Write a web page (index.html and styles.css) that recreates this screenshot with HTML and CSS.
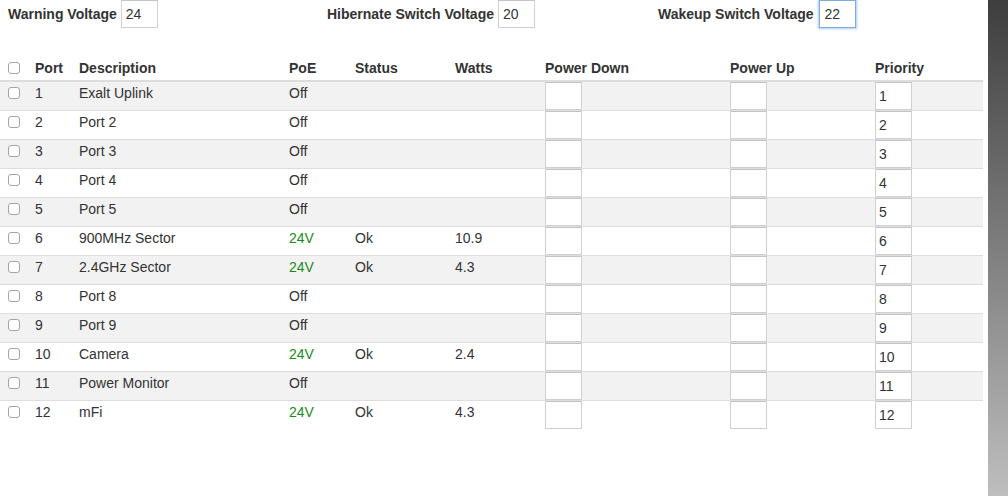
FILE: index.html
```html
<!DOCTYPE html>
<html lang="en">
<head>
  <meta charset="UTF-8" />
  <title>Port Power</title>
  <link rel="stylesheet" href="styles.css">
</head>
<body>

  <div class="page">
    <div class="voltages">
      <label class="voltage">Warning Voltage <input class="field" type="text" value="24"></label>
      <label class="voltage">Hibernate Switch Voltage <input class="field" type="text" value="20"></label>
      <label class="voltage">Wakeup Switch Voltage <input class="field focused" type="text" value="22"></label>
    </div>

    <table class="ports">
      <colgroup>
        <col class="col-check">
        <col class="col-port">
        <col class="col-desc">
        <col class="col-poe">
        <col class="col-status">
        <col class="col-watts">
        <col class="col-down">
        <col class="col-up">
        <col class="col-priority">
      </colgroup>
      <thead>
        <tr>
          <th><input type="checkbox" class="check"></th>
          <th>Port</th>
          <th>Description</th>
          <th>PoE</th>
          <th>Status</th>
          <th>Watts</th>
          <th>Power Down</th>
          <th>Power Up</th>
          <th>Priority</th>
        </tr>
      </thead>
      <tbody id="port-rows"></tbody>
    </table>
  </div>

  <div class="edge"></div>

  <script>
    const ports = [
      { port: 1, desc: "Exalt Uplink", poe: "Off" },
      { port: 2, desc: "Port 2", poe: "Off" },
      { port: 3, desc: "Port 3", poe: "Off" },
      { port: 4, desc: "Port 4", poe: "Off" },
      { port: 5, desc: "Port 5", poe: "Off" },
      { port: 6, desc: "900MHz Sector", poe: "24V", status: "Ok", watts: "10.9" },
      { port: 7, desc: "2.4GHz Sector", poe: "24V", status: "Ok", watts: "4.3" },
      { port: 8, desc: "Port 8", poe: "Off" },
      { port: 9, desc: "Port 9", poe: "Off" },
      { port: 10, desc: "Camera", poe: "24V", status: "Ok", watts: "2.4" },
      { port: 11, desc: "Power Monitor", poe: "Off" },
      { port: 12, desc: "mFi", poe: "24V", status: "Ok", watts: "4.3" }
    ];

    const rows = document.getElementById('port-rows');
    ports.forEach(p => {
      const tr = document.createElement('tr');
      const poeClass = p.poe === 'Off' ? '' : ' class="on"';
      tr.innerHTML =
        '<td><input type="checkbox" class="check"></td>' +
        '<td>' + p.port + '</td>' +
        '<td>' + p.desc + '</td>' +
        '<td' + poeClass + '>' + p.poe + '</td>' +
        '<td>' + (p.status || '') + '</td>' +
        '<td>' + (p.watts || '') + '</td>' +
        '<td><input class="field" type="text"></td>' +
        '<td><input class="field" type="text"></td>' +
        '<td><input class="field" type="text" value="' + p.port + '"></td>';
      rows.appendChild(tr);
    });
  </script>
</body>
</html>
```

FILE: styles.css
```css
body {
    margin: 0;
    font-family: "Liberation Sans", Arial, sans-serif;
    font-size: 14px;
    color: #333;
    background-color: #fff;
    display: flex;
    min-height: 100vh;
}

.page {
    width: 988px;
}

.edge {
    flex: 1;
    background: linear-gradient(to bottom, #3e3e3e, #bebebe);
}

.voltages {
    display: grid;
    grid-template-columns: 319px 331px auto;
    padding-left: 8px;
    height: 28px;
}

.voltage {
    font-weight: bold;
}

.voltage:nth-child(3) .field {
    margin-left: 2px;
}

.field {
    box-sizing: border-box;
    width: 37px;
    height: 28px;
    margin: 0;
    padding: 0 3px;
    border: 1px solid #d0d0d0;
    border-top-color: #c4c4c4;
    font-family: inherit;
    font-size: 14px;
    color: #333;
    background-color: #fff;
    outline: none;
}

.voltage .field {
    font-weight: normal;
    padding-left: 4px;
}

.field.focused {
    border-color: #7eaee0;
    box-shadow: 0 0 2px 1px rgba(102, 160, 230, 0.55);
}

.ports {
    width: 983px;
    margin-top: 30px;
    table-layout: fixed;
    border-collapse: collapse;
    border-spacing: 0;
}

.col-check { width: 27px; }
.col-port { width: 44px; }
.col-desc { width: 210px; }
.col-poe { width: 66px; }
.col-status { width: 100px; }
.col-watts { width: 90px; }
.col-down { width: 185px; }
.col-up { width: 145px; }
.col-priority { width: 116px; }

.ports th {
    text-align: left;
    font-weight: bold;
    line-height: 20px;
    padding: 0 8px 2px;
    vertical-align: bottom;
    border-bottom: 2px solid #ddd;
}

.ports td {
    padding: 0 8px;
    line-height: 22px;
    height: 28px;
    vertical-align: top;
    border-top: 1px solid #ddd;
}

.ports tbody tr:first-child td {
    border-top: none;
}

.ports tbody tr:nth-child(odd) {
    background-color: #f2f2f2;
}

.ports td .field {
    display: block;
}

.ports td.on {
    color: #1a8a1a;
}

.check {
    appearance: none;
    -webkit-appearance: none;
    box-sizing: border-box;
    width: 12px;
    height: 12px;
    margin: 0;
    border: 1px solid #a4a4a4;
    border-radius: 3px;
    background-color: #fff;
    vertical-align: -1px;
}
```
